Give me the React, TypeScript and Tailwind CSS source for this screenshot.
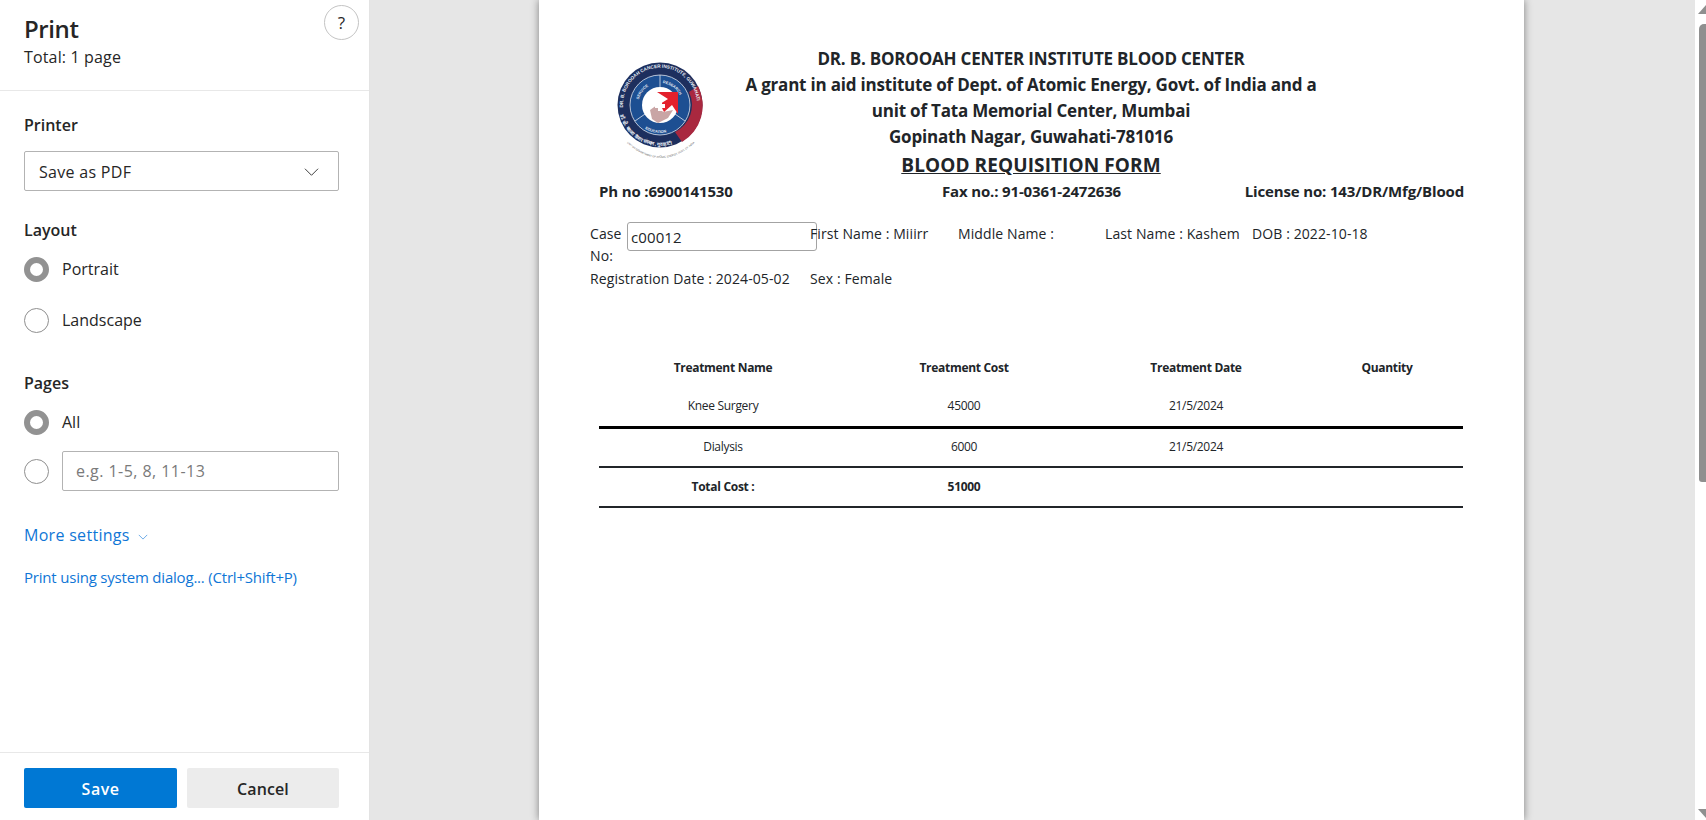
const font = { fontFamily: '"Open Sans", "Noto Sans", sans-serif' };

function Radio({ checked }: { checked?: boolean }) {
  return (
    <span
      className={`block size-[25px] shrink-0 rounded-full bg-white ${
        checked ? "border-[6px] border-[#929292]" : "border border-[#8f8f8f]"
      }`}
    />
  );
}

function Chevron({ className }: { className: string }) {
  return (
    <svg viewBox="0 0 16 10" fill="none" stroke="currentColor" strokeWidth="1" className={className}>
      <path d="M1 1.5 8 8.5 15 1.5" />
    </svg>
  );
}

function Logo() {
  return (
    <svg viewBox="0 0 100 106" className="ml-[71px] mt-[12px] block h-[106px] w-[100px] shrink-0">
      <defs>
        <path id="topArc" d="M13.600 53.400A37 37 0 1 1 86.400 53.400" />
        <path id="bottomArc" d="M9 47a41 41 0 0 0 82 0" />
        <path id="midTop" d="M28 47a22 22 0 0 1 44 0" />
        <path id="midBottom" d="M22 47a28 28 0 0 0 56 0" />
        <path id="footArc" d="M10 78Q50 122 92 78" />
      </defs>
      <circle cx="50" cy="47" r="42.500" fill="#1d2f5e" />
      <path d="M88 28a42.500 42.500 0 0 1-16 56l-7-10a30 30 0 0 0 14-40z" fill="#a9283f" />
      <circle cx="50" cy="47" r="30" fill="#1d4f92" stroke="#dfe5ee" strokeWidth="0.8" />
      <path d="M50 17v12M25 63l10-7M75 63l-10-7" stroke="#dfe5ee" strokeWidth="0.8" />
      <circle cx="50" cy="47" r="18" fill="#fff" />
      <path d="M40 52 47 47 53 54 63 52 58 60 48 65 42 61z" fill="#c9a5a5" />
      <path d="M47 34H68V56L62 47 54 54 50 46 58 41z" fill="#e3202c" />
      <path d="M48 43h4v3h3v4h-3v3h-4v-3h-3v-4h3z" fill="#fff" />
      <g fill="#e8edf5" fontFamily="Liberation Sans" fontWeight="700">
        <text fontSize="4.700"><textPath href="#topArc" startOffset="3%">DR. B. BOROOAH CANCER INSTITUTE, GUWAHATI</textPath></text>
        <text fontSize="3.800"><textPath href="#midTop" startOffset="8%">SERVICE</textPath></text>
        <text fontSize="3.800"><textPath href="#midTop" startOffset="54%">RESEARCH</textPath></text>
        <text fontSize="3.800"><textPath href="#midBottom" startOffset="32%">EDUCATION</textPath></text>
        <text fontSize="5"><textPath href="#bottomArc" startOffset="8%">डॉ. बी. बरुआ कैंसर संस्थान, गुवाहाटी</textPath></text>
      </g>
      <text fontSize="2.600" fill="#555" fontFamily="Liberation Sans"><textPath href="#footArc" startOffset="10%">UNIT OF DEPARTMENT OF ATOMIC ENERGY, GOVT. OF INDIA</textPath></text>
    </svg>
  );
}

function Sidebar() {
  return (
    <aside className="flex h-full w-[370px] shrink-0 flex-col border-r border-[#e3e3e3] bg-white text-[#262626]">
      <header className="relative h-[91px] shrink-0 border-b border-[#e8e8e8] pl-6 pt-[12px]">
        <h1 className="text-[24px] font-semibold leading-[34px] tracking-[-0.4px]">Print</h1>
        <p className="text-[16px] leading-[22px] tracking-[0.15px]">Total: 1 page</p>
        <span className="absolute right-[10px] top-[5px] flex size-[35px] items-center justify-center rounded-full border border-[#c4c4c4] text-[17px]">?</span>
      </header>
      <div className="flex-1 pl-6 pr-[30px]">
        <h2 className="mt-[23px] text-[16px] font-semibold leading-[22px]">Printer</h2>
        <div className="mt-[15px] flex h-[40px] items-center justify-between rounded-[2px] border border-[#b3b3b3] pl-[14px] pr-[19px] pt-[1px] text-[16px] tracking-[0.3px]">
          Save as PDF
          <Chevron className="h-[10px] w-[15px] text-[#333]" />
        </div>
        <h2 className="mt-[28px] text-[16px] font-semibold leading-[22px]">Layout</h2>
        <label className="mt-[15px] flex items-center gap-[13px] text-[16px] leading-[27px]">
          <Radio checked />
          Portrait
        </label>
        <label className="mt-[24px] flex items-center gap-[13px] text-[16px] leading-[27px]">
          <Radio />
          Landscape
        </label>
        <h2 className="mt-[38px] text-[16px] font-semibold leading-[22px]">Pages</h2>
        <label className="mt-[15px] flex items-center gap-[13px] text-[16px] leading-[27px]">
          <Radio checked />
          All
        </label>
        <div className="mt-[15px] flex items-center gap-[13px]">
          <Radio />
          <div className="flex h-[40px] flex-1 items-center rounded-[2px] border border-[#b3b3b3] pl-[13px] text-[16px] tracking-[0.45px] text-[#7a7a7a]">
            e.g. 1-5, 8, 11-13
          </div>
        </div>
        <div className="mt-[32px] flex items-center gap-[8px] text-[16px] leading-[24px] tracking-[0.3px] text-[#0f76d6]">
          More settings
          <Chevron className="mt-[4px] h-[6px] w-[10px]" />
        </div>
        <p className="mt-[20px] text-[15px] leading-[20px] tracking-[-0.2px] text-[#0f76d6]">Print using system dialog... (Ctrl+Shift+P)</p>
      </div>
      <footer className="flex h-[68px] shrink-0 gap-[10px] border-t border-[#e8e8e8] pl-6 pr-[30px] pt-[15px]">
        <button className="h-[40px] w-[153px] rounded-[2px] bg-[#0078d4] pt-[1px] text-[16px] font-semibold tracking-[0.5px] text-white">Save</button>
        <button className="h-[40px] flex-1 rounded-[2px] bg-[#ececec] pt-[1px] text-[16px] font-semibold tracking-[0.1px] text-[#262626]">Cancel</button>
      </footer>
    </aside>
  );
}

function PrintPage() {
  return (
    <div className="ml-[169px] h-full w-[985px] shrink-0 overflow-hidden bg-white pt-[46px] text-[#212529] shadow-[0_0_8px_rgba(0,0,0,0.45)]">
      <div className="flex h-[134px]">
        <Logo />
        <div className="w-[642px] text-center text-[17px] font-bold leading-[26px] tracking-[-0.2px]">
          <p>DR. B. BOROOAH CENTER INSTITUTE BLOOD CENTER</p>
          <p>A grant in aid institute of Dept. of Atomic Energy, Govt. of India and a</p>
          <p>unit of Tata Memorial Center, Mumbai</p>
          <p>Gopinath Nagar, Guwahati-781016</p>
          <p className="text-[19px] leading-[30px] tracking-[0.1px] underline">BLOOD REQUISITION FORM</p>
        </div>
      </div>
      <div className="mx-[60px] grid grid-cols-3 text-[15px] font-bold leading-[22px] tracking-[-0.15px]">
        <span>Ph no :6900141530</span>
        <span className="text-center">Fax no.: 91-0361-2472636</span>
        <span className="text-right">License no: 143/DR/Mfg/Blood</span>
      </div>
      <div className="ml-[51px] mt-[20px] flex text-[14px] leading-[22px] tracking-[0.1px]">
        <div className="flex w-[220px]">
          <span className="w-[37px] shrink-0 pt-[1px]">Case No:</span>
          <span className="h-[29px] w-[190px] shrink-0 rounded-[3px] border border-[#a3a3a3] pl-[3px] pt-[3px] text-[15px] leading-[23px]">c00012</span>
        </div>
        <span className="w-[148px] pt-[1px]">First Name : Miiirr</span>
        <span className="w-[147px] pt-[1px]">Middle Name :</span>
        <span className="w-[147px] pt-[1px]">Last Name : Kashem</span>
        <span className="pt-[1px]">DOB : 2022-10-18</span>
      </div>
      <div className="ml-[51px] mt-[1px] flex text-[14px] leading-[22px] tracking-[0.1px]">
        <span className="w-[220px]">Registration Date : 2024-05-02</span>
        <span>Sex : Female</span>
      </div>
      <table className="ml-[60px] mt-[59px] w-[864px] table-fixed border-collapse text-center text-[12px] tracking-[-0.3px]">
        <colgroup>
          <col className="w-[248px]" />
          <col className="w-[234px]" />
          <col className="w-[230px]" />
          <col className="w-[152px]" />
        </colgroup>
        <tbody>
          <tr className="h-[38px] font-bold">
            <td>Treatment Name</td>
            <td>Treatment Cost</td>
            <td>Treatment Date</td>
            <td>Quantity</td>
          </tr>
          <tr className="h-[40px] border-b-[3px] border-black">
            <td>Knee Surgery</td>
            <td>45000</td>
            <td>21/5/2024</td>
            <td></td>
          </tr>
          <tr className="h-[40px] border-b-2 border-[#212529]">
            <td>Dialysis</td>
            <td>6000</td>
            <td>21/5/2024</td>
            <td></td>
          </tr>
          <tr className="h-[40px] border-b-2 border-[#212529] font-bold">
            <td>Total Cost :</td>
            <td>51000</td>
            <td></td>
            <td></td>
          </tr>
        </tbody>
      </table>
    </div>
  );
}

function Scrollbar() {
  return (
    <div className="relative h-full w-[11px] shrink-0 overflow-hidden bg-white">
      <span className="absolute left-[3px] top-[5px] h-0 w-0 border-x-[8px] border-b-[9px] border-x-transparent border-b-[#8f8f8f]" />
      <span className="absolute bottom-[338px] left-[4px] right-0 top-[24px] rounded-tl-[5px] rounded-bl-[3px] bg-[#8f8f8f]" />
      <span className="absolute bottom-[2px] left-[3px] h-0 w-0 border-x-[8px] border-t-[9px] border-x-transparent border-t-[#8f8f8f]" />
    </div>
  );
}

export default function App() {
  return (
    <div className="flex h-screen w-full overflow-hidden bg-[#e6e6e6]" style={font}>
      <Sidebar />
      <main className="flex h-full min-w-0 flex-1">
        <PrintPage />
      </main>
      <Scrollbar />
    </div>
  );
}
